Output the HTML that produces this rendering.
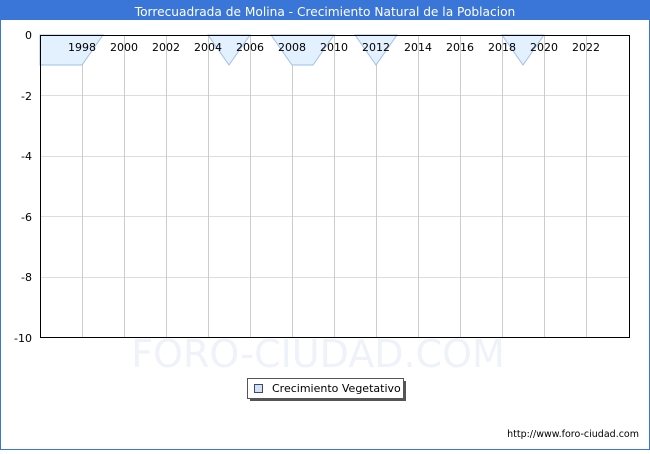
<!DOCTYPE html>
<html><head><style>
body{margin:0;width:650px;height:450px;overflow:hidden;font-family:"DejaVu Sans","Liberation Sans",sans-serif;}
</style></head><body>
<svg width="650" height="450" xmlns="http://www.w3.org/2000/svg" font-family="DejaVu Sans, Liberation Sans, sans-serif">
<rect x="0" y="0" width="650" height="450" fill="#3a75d8"/>
<rect x="1" y="20" width="648" height="429" fill="#fff"/>
<text x="325" y="16" font-size="12.2" fill="#fff" text-anchor="middle">Torrecuadrada de Molina - Crecimiento Natural de la Poblacion</text>
<text x="318" y="367" font-size="38" fill="#f0f2fa" text-anchor="middle">FORO-CIUDAD.COM</text>
<g stroke="#dddddd" stroke-width="1">
<line x1="40" y1="95.5" x2="630" y2="95.5"/><line x1="40" y1="156.5" x2="630" y2="156.5"/>
<line x1="40" y1="216.5" x2="630" y2="216.5"/><line x1="40" y1="277.5" x2="630" y2="277.5"/>
</g>
<g stroke="#cccccc" stroke-width="1">
<line x1="82.5" y1="35" x2="82.5" y2="338"/><line x1="124.5" y1="35" x2="124.5" y2="338"/>
<line x1="166.5" y1="35" x2="166.5" y2="338"/><line x1="208.5" y1="35" x2="208.5" y2="338"/>
<line x1="250.5" y1="35" x2="250.5" y2="338"/><line x1="292.5" y1="35" x2="292.5" y2="338"/>
<line x1="334.5" y1="35" x2="334.5" y2="338"/><line x1="376.5" y1="35" x2="376.5" y2="338"/>
<line x1="418.5" y1="35" x2="418.5" y2="338"/><line x1="460.5" y1="35" x2="460.5" y2="338"/>
<line x1="502.5" y1="35" x2="502.5" y2="338"/><line x1="544.5" y1="35" x2="544.5" y2="338"/>
<line x1="586.5" y1="35" x2="586.5" y2="338"/>
</g>
<path d="M40,35 L40,65 L82,65 L103,35 Z M208,35 L229,65 L250,35 Z M271,35 L292,65 L313,65 L334,35 Z M355,35 L376,65 L397,35 Z M502,35 L523,65 L544,35 Z" fill="#e3f0fd" stroke="#9ec0ee" stroke-width="1"/>
<rect x="40.5" y="35.5" width="589" height="302" fill="none" stroke="#000" stroke-width="1"/>
<g font-size="11" fill="#000" text-anchor="middle">
<text x="82" y="51">1998</text><text x="124" y="51">2000</text><text x="166" y="51">2002</text>
<text x="208" y="51">2004</text><text x="250" y="51">2006</text><text x="292" y="51">2008</text>
<text x="334" y="51">2010</text><text x="376" y="51">2012</text><text x="418" y="51">2014</text>
<text x="460" y="51">2016</text><text x="502" y="51">2018</text><text x="544" y="51">2020</text>
<text x="586" y="51">2022</text>
</g>
<g font-size="11" fill="#000" text-anchor="end">
<text x="32" y="39">0</text><text x="32" y="100">-2</text><text x="32" y="160">-4</text>
<text x="32" y="221">-6</text><text x="32" y="281">-8</text><text x="32" y="342">-10</text>
</g>
<rect x="250" y="381" width="156" height="20" fill="#555"/>
<rect x="247.5" y="378.5" width="156" height="20" fill="#fff" stroke="#555"/>
<rect x="254.5" y="384.5" width="8" height="8" fill="#cfe3f8" stroke="#446"/>
<text x="272" y="392" font-size="11" fill="#000">Crecimiento Vegetativo</text>
<text x="639" y="437" font-size="9.5" fill="#000" text-anchor="end">http://www.foro-ciudad.com</text>
</svg>
</body></html>
